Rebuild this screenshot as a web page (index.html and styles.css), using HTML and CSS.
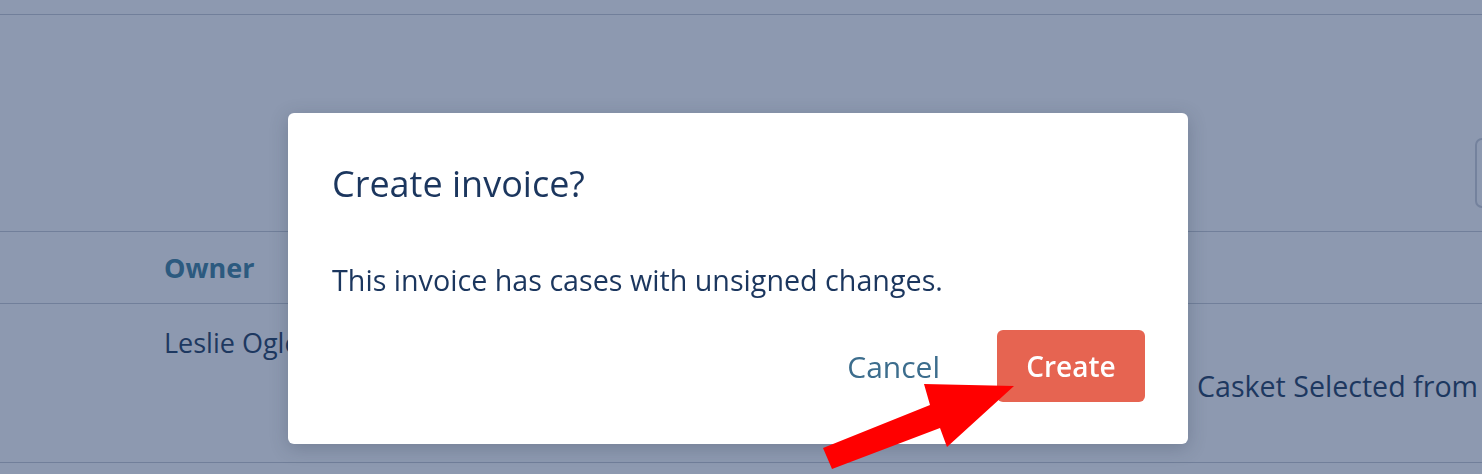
FILE: index.html
```html
<!DOCTYPE html>
<html lang="en">
<head>
    <meta charset="UTF-8">
    <meta name="viewport" content="width=device-width, initial-scale=1.0">
    <title>Invoices</title>
    <link rel="stylesheet" href="styles.css">
</head>
<body>
    <div class="page">
        <div class="topbar"></div>
        <div class="toolbar">
            <div class="filter-box"></div>
        </div>
        <div class="table">
            <div class="row head">
                <div class="cell"></div>
                <div class="cell">Owner</div>
                <div class="cell"></div>
            </div>
            <div class="row body-row">
                <div class="cell"></div>
                <div class="cell owner">Leslie Ogle</div>
                <div class="cell detail">Casket Selected from</div>
            </div>
        </div>
    </div>

    <!-- Confirm Modal -->
    <div class="modal">
        <h2 class="modal-title">Create invoice?</h2>
        <p class="modal-text">This invoice has cases with unsigned changes.</p>
        <div class="modal-actions">
            <button class="btn-cancel">Cancel</button>
            <button class="btn-create">Create</button>
        </div>
    </div>

    <!-- annotation arrow -->
    <svg class="arrow" width="1482" height="474" viewBox="0 0 1482 474">
        <polygon points="823,448 930,405 924,384 1014,386 947,447 940,428 832,469" fill="#ff0000"/>
    </svg>
</body>
</html>
```

FILE: styles.css
```css
html, body {
    margin: 0;
    padding: 0;
    height: 100%;
    overflow: hidden;
}
body {
    font-family: 'Open Sans', 'Noto Sans', sans-serif;
    background-color: #8d99b0;
    color: #1d3860;
}
.topbar {
    height: 14px;
    border-bottom: 1px solid #717f9a;
}
.toolbar {
    height: 216px;
    display: flex;
    justify-content: flex-end;
    align-items: flex-start;
    padding-top: 123px;
    box-sizing: border-box;
}
.filter-box {
    width: 60px;
    height: 70px;
    margin-right: -53px;
    border: 2px solid #74829d;
    border-radius: 7px;
    box-sizing: border-box;
}
.row {
    display: grid;
    grid-template-columns: 164px 1033px 1fr;
    border-top: 1px solid #717f9a;
}
.row.head {
    height: 71px;
    align-items: center;
    font-size: 27px;
    font-weight: 700;
    color: #2c5a7f;
}
.row.body-row {
    height: 158px;
    border-bottom: 1px solid #717f9a;
    font-size: 27px;
    white-space: nowrap;
}
.owner {
    padding-top: 20px;
}
.detail {
    padding-top: 62px;
    font-size: 28.6px;
}
.modal {
    position: fixed;
    top: 113px;
    left: 288px;
    width: 900px;
    box-sizing: border-box;
    padding: 47px 43px 42px 44px;
    background-color: white;
    border-radius: 6px;
    box-shadow: 0 4px 18px rgba(40, 50, 70, 0.25);
}
.modal-title {
    margin: 0;
    font-size: 36px;
    line-height: 48px;
    font-weight: 400;
    color: #1b365e;
}
.modal-text {
    margin: 52px 0 0;
    font-size: 28.7px;
    line-height: 40px;
    color: #1b365e;
}
.modal-actions {
    display: flex;
    justify-content: flex-end;
    align-items: center;
    gap: 57px;
    margin-top: 30px;
}
.btn-cancel {
    font-family: inherit;
    font-size: 30px;
    background: none;
    border: none;
    padding: 0;
    color: #3c6d8d;
    cursor: pointer;
}
.btn-create {
    font-family: inherit;
    font-size: 28px;
    font-weight: 600;
    height: 72px;
    width: 148px;
    padding: 0;
    background-color: #e66451;
    color: white;
    border: none;
    border-radius: 6px;
    cursor: pointer;
}
.arrow {
    position: fixed;
    top: 0;
    left: 0;
    pointer-events: none;
}
```
